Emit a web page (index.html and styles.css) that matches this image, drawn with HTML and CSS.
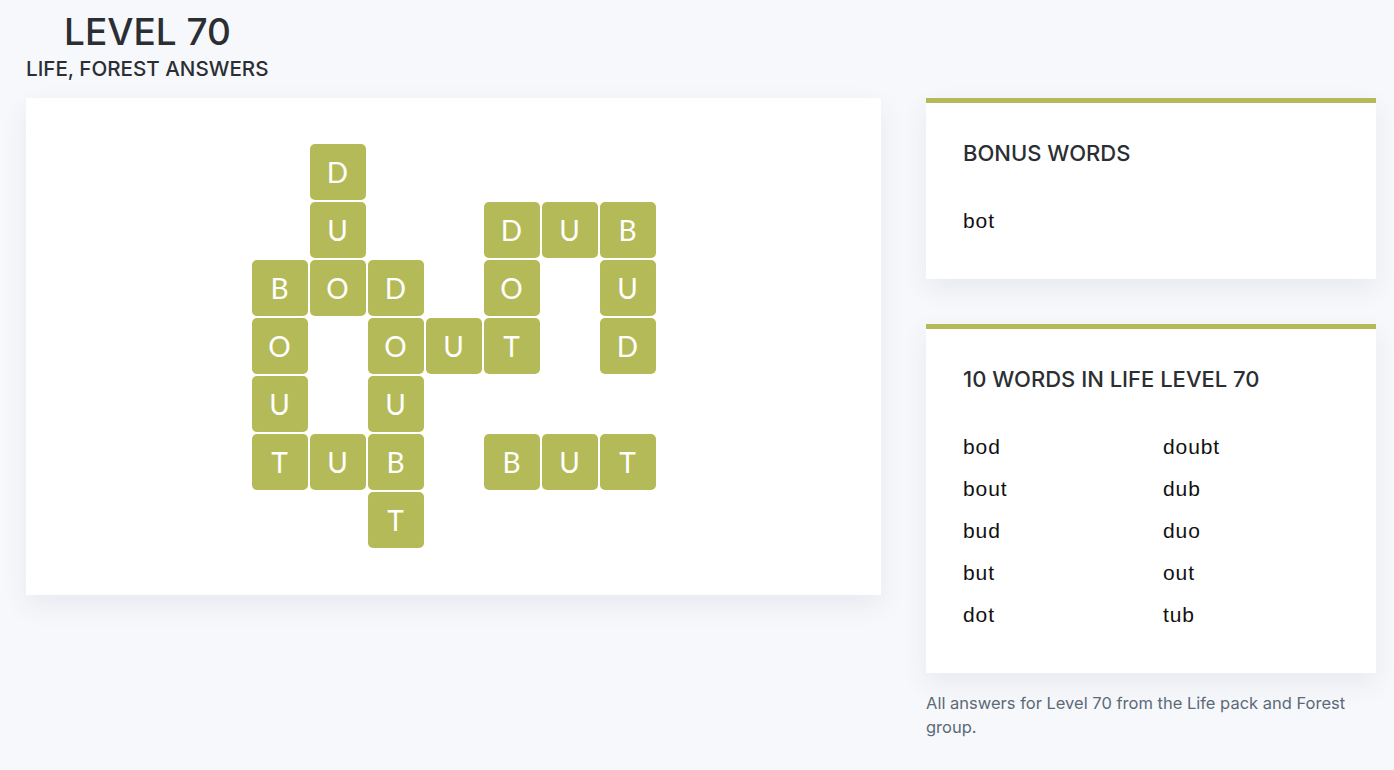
FILE: index.html
```html
<!DOCTYPE html>
<html lang="en">
<head>
    <meta charset="UTF-8">
    <meta name="viewport" content="width=device-width, initial-scale=1.0">
    <title>Level 70 - Life, Forest Answers</title>
    <link rel="stylesheet" href="styles.css">
</head>
<body>
    <header class="page-header">
        <h1 class="level-title">LEVEL 70</h1>
        <h2 class="level-subtitle">LIFE, FOREST ANSWERS</h2>
    </header>

    <main class="layout">
        <section class="board-card">
            <div class="board">
                <!-- row 1 -->
                <span></span><span class="tile">D</span><span></span><span></span><span></span><span></span><span></span>
                <!-- row 2 -->
                <span></span><span class="tile">U</span><span></span><span></span><span class="tile">D</span><span class="tile">U</span><span class="tile">B</span>
                <!-- row 3 -->
                <span class="tile">B</span><span class="tile">O</span><span class="tile">D</span><span></span><span class="tile">O</span><span></span><span class="tile">U</span>
                <!-- row 4 -->
                <span class="tile">O</span><span></span><span class="tile">O</span><span class="tile">U</span><span class="tile">T</span><span></span><span class="tile">D</span>
                <!-- row 5 -->
                <span class="tile">U</span><span></span><span class="tile">U</span><span></span><span></span><span></span><span></span>
                <!-- row 6 -->
                <span class="tile">T</span><span class="tile">U</span><span class="tile">B</span><span></span><span class="tile">B</span><span class="tile">U</span><span class="tile">T</span>
                <!-- row 7 -->
                <span></span><span></span><span class="tile">T</span><span></span><span></span><span></span><span></span>
            </div>
        </section>

        <aside class="sidebar">
            <div class="word-card">
                <h3>BONUS WORDS</h3>
                <ul class="word-list">
                    <li>bot</li>
                </ul>
            </div>

            <div class="word-card">
                <h3>10 WORDS IN LIFE LEVEL 70</h3>
                <ul class="word-list two-col">
                    <li>bod</li>
                    <li>bout</li>
                    <li>bud</li>
                    <li>but</li>
                    <li>dot</li>
                    <li>doubt</li>
                    <li>dub</li>
                    <li>duo</li>
                    <li>out</li>
                    <li>tub</li>
                </ul>
            </div>

            <p class="note">All answers for Level 70 from the Life pack and Forest group.</p>
        </aside>
    </main>
</body>
</html>
```

FILE: styles.css
```css
body {
    margin: 0;
    background-color: #f7f8fb;
    font-family: Inter, "Noto Sans", sans-serif;
    color: #2b2e33;
}
.page-header {
    padding: 9px 26px 0;
}
.level-title {
    margin: 0 0 0 38px;
    font-size: 37px;
    font-weight: 500;
    line-height: 46px;
}
.level-subtitle {
    margin: 0;
    font-size: 20.6px;
    font-weight: 500;
    line-height: 27px;
}
.layout {
    display: grid;
    grid-template-columns: 855px 450px;
    gap: 45px;
    align-items: start;
    padding: 16px 26px 0;
}
.board-card {
    background-color: #fff;
    box-shadow: 0 10px 25px rgba(40, 60, 100, 0.08);
    display: flex;
    justify-content: center;
    padding: 46px 0 47px;
}
.board {
    display: grid;
    grid-template-columns: repeat(7, 56px);
    grid-auto-rows: 56px;
    gap: 2px;
}
.tile {
    display: flex;
    justify-content: center;
    align-items: center;
    background-color: #b5ba58;
    border-radius: 5px;
    color: #fff;
    font-family: Lato, "Open Sans", sans-serif;
    font-weight: 400;
    font-size: 28px;
}
.sidebar {
    display: flex;
    flex-direction: column;
    gap: 45px;
}
.word-card {
    background-color: #fff;
    border-top: 5px solid #b5ba58;
    box-shadow: 0 10px 25px rgba(40, 60, 100, 0.08);
    padding: 38px 37px 37px;
}
.word-card h3 {
    margin: 0 0 35px;
    font-size: 22px;
    font-weight: 500;
    line-height: 24px;
}
.word-list {
    list-style: none;
    margin: 0;
    padding: 0;
    font-family: "Liberation Sans", Arial, sans-serif;
    font-size: 21px;
    letter-spacing: 0.9px;
    line-height: 24px;
    color: #111;
}
.word-list li {
    padding: 9px 0;
}
.word-list.two-col {
    display: grid;
    grid-template-columns: 200px 1fr;
    grid-template-rows: repeat(5, auto);
    grid-auto-flow: column;
}
.note {
    margin: -27px 0 0;
    font-size: 16.5px;
    line-height: 24px;
    color: #5b6a78;
}
```
